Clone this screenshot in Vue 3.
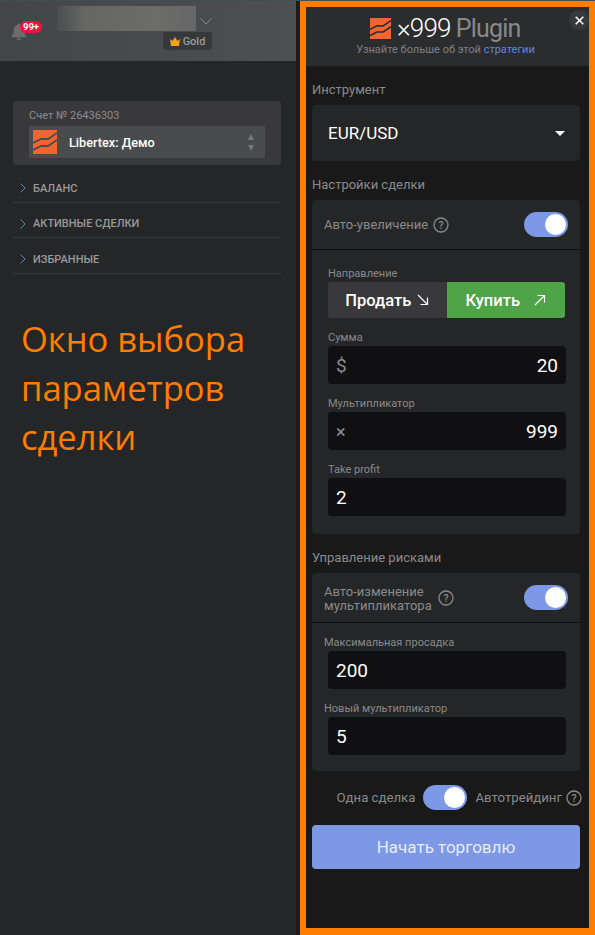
<script setup>
const menu = ['БАЛАНС', 'АКТИВНЫЕ СДЕЛКИ', 'ИЗБРАННЫЕ']
</script>

<template>
  <div class="page">
    <div class="left">
      <div class="top">
        <div class="bell">
          <svg width="16" height="18" viewBox="0 0 16 18"><path d="M8 0.5c.8 0 1.300.6 1.300 1.300 2.600.6 3.900 2.700 3.900 5.400 0 3 .8 4.600 2.300 6v1H.5v-1c1.500-1.400 2.300-3 2.300-6 0-2.700 1.300-4.800 3.900-5.400C6.700 1.100 7.200.5 8 .5zM5.800 15.500h4.400c0 1-1 1.800-2.200 1.800s-2.200-.8-2.200-1.800z" fill="#6b6c6e"/></svg>
          <span class="badge">99+</span>
        </div>
        <div class="blur"></div>
        <svg class="chev" width="12" height="7" viewBox="0 0 12 7"><path d="M.5.5 6 6l5.500-5.500" fill="none" stroke="#8a8b8d" stroke-width="1"/></svg>
        <div class="gold">
          <svg width="10" height="9" viewBox="0 0 10 9"><path d="M0 2l2.500 2L5 0l2.500 4L10 2 9 9H1z" fill="#f5a31a"/></svg>
          Gold
        </div>
      </div>

      <div class="account">
        <div class="acc-label">Счет № 26436303</div>
        <div class="acc-select">
          <svg width="24" height="24" viewBox="0 0 24 24"><rect width="24" height="24" fill="#f26531"/><path d="M0 13 8 9h7l9-6M0 20l8-4h7l9-6" fill="none" stroke="#4a4b4d" stroke-width="1.800"/></svg>
          <span class="acc-name">Libertex: Демо</span>
          <span class="arrows"><i class="up"></i><i class="down"></i></span>
        </div>
      </div>

      <div class="menu">
        <div v-for="item in menu" :key="item" class="menu-row">
          <svg width="6" height="10" viewBox="0 0 6 10"><path d="M.7.7 5 5 .7 9.300" fill="none" stroke="#6f82bd" stroke-width="1"/></svg>
          <span>{{ item }}</span>
        </div>
      </div>

      <p class="caption">Окно выбора<br>параметров<br>сделки</p>
    </div>

    <div class="gutter"></div>

    <div class="frame">
      <div class="panel">
        <div class="head">
          <div class="logo">
            <svg width="21" height="21" viewBox="0 0 24 24"><rect width="24" height="24" fill="#f26531"/><path d="M0 13 8 9h7l9-6M0 20l8-4h7l9-6" fill="none" stroke="#2c2d2f" stroke-width="1.800"/></svg>
            <span class="x999">×999</span>
            <span class="plugin">Plugin</span>
          </div>
          <div class="sub">Узнайте больше об этой <span>стратегии</span></div>
          <div class="close">
            <svg width="9" height="9" viewBox="0 0 9 9"><path d="M.7.7l7.600 7.600M8.300.7.700 8.300" stroke="#fff" stroke-width="1.600"/></svg>
          </div>
        </div>

        <div class="body">
          <div class="title first">Инструмент</div>
          <div class="select">
            <span>EUR/USD</span>
            <i class="caret"></i>
          </div>

          <div class="title">Настройки сделки</div>
          <div class="card">
            <div class="row">
              <span>Авто-увеличение</span>
              <svg class="help" width="16" height="16" viewBox="0 0 16 16"><circle cx="8" cy="8" r="7" fill="none" stroke="#8a8a8a" stroke-width="1.300"/><text x="8" y="11.500" text-anchor="middle" font-size="10.500" font-family="Roboto" font-weight="500" fill="#8a8a8a">?</text></svg>
              <div class="toggle"><i></i></div>
            </div>
            <div class="fields">
              <label class="dir-label">Направление</label>
              <div class="dir">
                <div class="sell">Продать
                  <svg width="12" height="12" viewBox="0 0 12 12"><path d="M1 1l9.500 9.500M10.500 3.500v7h-7" fill="none" stroke="#fff" stroke-width="1.200"/></svg>
                </div>
                <div class="buy">Купить
                  <svg width="12" height="12" viewBox="0 0 12 12"><path d="M1 11 10.500 1.500M3.500 1.500h7v7" fill="none" stroke="#fff" stroke-width="1.200"/></svg>
                </div>
              </div>
              <label>Сумма</label>
              <div class="input"><span class="pre dollar">$</span><span class="val">20</span></div>
              <label>Мультипликатор</label>
              <div class="input"><span class="pre">×</span><span class="val">999</span></div>
              <label>Take profit</label>
              <div class="input"><span>2</span></div>
            </div>
          </div>

          <div class="title">Управление рисками</div>
          <div class="card">
            <div class="row">
              <span class="two">Авто-изменение<br>мультипликатора</span>
              <svg class="help" width="16" height="16" viewBox="0 0 16 16"><circle cx="8" cy="8" r="7" fill="none" stroke="#8a8a8a" stroke-width="1.300"/><text x="8" y="11.500" text-anchor="middle" font-size="10.500" font-family="Roboto" font-weight="500" fill="#8a8a8a">?</text></svg>
              <div class="toggle"><i></i></div>
            </div>
            <div class="fields risk">
              <label>Максимальная просадка</label>
              <div class="input"><span>200</span></div>
              <label>Новый мультипликатор</label>
              <div class="input"><span>5</span></div>
            </div>
          </div>

          <div class="mode">
            <span>Одна сделка</span>
            <div class="toggle"><i></i></div>
            <span>Автотрейдинг</span>
            <svg width="16" height="16" viewBox="0 0 16 16"><circle cx="8" cy="8" r="7" fill="none" stroke="#8a8a8a" stroke-width="1.300"/><text x="8" y="11.500" text-anchor="middle" font-size="10.500" font-family="Roboto" font-weight="500" fill="#8a8a8a">?</text></svg>
          </div>

          <div class="start">Начать торговлю</div>
        </div>
      </div>
    </div>
  </div>
</template>

<style>
html, body { margin: 0; background: #252628; }
</style>

<style scoped>
.page {
  width: 595px;
  height: 935px;
  display: flex;
  overflow: hidden;
  background: #252628;
  font-family: Roboto, "Liberation Sans", sans-serif;
  border-top: 1px solid #3f5054;
  box-sizing: border-box;
}

.left {
  width: 296px;
  flex: none;
}

.top {
  position: relative;
  height: 60px;
  background: linear-gradient(90deg, #444547, #4e4f51);
  margin-bottom: 40px;
}

.bell {
  position: absolute;
  left: 11px;
  top: 22px;
  line-height: 0;
}

.badge {
  position: absolute;
  left: 9px;
  top: -2px;
  width: 22px;
  height: 12px;
  border-radius: 6px;
  background: #f0123c;
  color: #fff;
  font-size: 9.500px;
  font-weight: 700;
  line-height: 12px;
  text-align: center;
}

.blur {
  position: absolute;
  left: 57px;
  top: 5px;
  width: 139px;
  height: 25px;
  background: linear-gradient(90deg, #4b4c4e, #666765 20%, #6c6d6b 70%, #666766);
}

.chev {
  position: absolute;
  left: 200px;
  top: 17px;
}

.gold {
  position: absolute;
  left: 163px;
  top: 31px;
  width: 49px;
  height: 18px;
  border-radius: 3px;
  background: #37383a;
  color: #9a9a9a;
  font-size: 11px;
  font-weight: 500;
  display: flex;
  align-items: center;
  justify-content: center;
  gap: 3px;
}

.account {
  width: 268px;
  height: 64px;
  margin: 0 0 0 13px;
  padding: 8px 16px 0;
  box-sizing: border-box;
  background: #39393b;
  border-radius: 4px;
}

.acc-label {
  font-size: 11px;
  color: #8c8c8c;
  line-height: 14px;
  margin-bottom: 3px;
}

.acc-select {
  height: 32px;
  background: #4a4b4d;
  display: flex;
  align-items: center;
  padding: 0 11px 0 4px;
  gap: 12px;
}

.acc-name {
  flex: 1;
  font-size: 12.700px;
  font-weight: 500;
  color: #fff;
}

.arrows {
  display: flex;
  flex-direction: column;
  gap: 5px;
}

.arrows i {
  border-left: 3px solid transparent;
  border-right: 3px solid transparent;
}

.arrows .up { border-bottom: 6px solid #77787a; }
.arrows .down { border-top: 6px solid #77787a; }

.menu {
  padding-top: 2px;
}

.menu-row {
  width: 268px;
  height: 35.500px;
  margin-left: 13px;
  padding: 8px 0 0 7px;
  box-sizing: border-box;
  border-bottom: 1px solid #39393b;
  display: flex;
  align-items: center;
  gap: 7px;
  font-size: 11px;
  font-weight: 500;
  color: #9a9a9a;
}

.caption {
  margin: 40px 0 0 21px;
  font-family: "Open Sans", sans-serif;
  font-size: 34.500px;
  line-height: 49px;
  color: #ff7d00;
}

.gutter {
  width: 4px;
  flex: none;
  background: #1c1c1e;
}

.frame {
  width: 295px;
  height: 934px;
  flex: none;
  padding: 6px;
  box-sizing: border-box;
  background: #ff7d00;
  margin-bottom: 1px;
}

.panel {
  height: 921px;
  background: #191919;
}

.head {
  position: relative;
  height: 59px;
  background: #2b2c2e;
  text-align: center;
  box-sizing: border-box;
  padding-top: 7px;
}

.logo {
  display: flex;
  align-items: center;
  gap: 6px;
  height: 28px;
  padding-left: 64px;
  font-size: 26px;
  font-weight: 300;
}

.x999 { color: #fff; letter-spacing: -0.8px; }
.plugin { color: #88898b; font-weight: 400; font-size: 25px; letter-spacing: -0.8px; margin-left: -1px; }

.sub {
  font-size: 11px;
  color: #7b8087;
  line-height: 14px;
  margin: 1px 4px 0 0;
}

.sub span { color: #5f85e8; }

.close {
  position: absolute;
  right: 0;
  top: 3px;
  width: 20px;
  height: 20px;
  border-radius: 50%;
  background: #38393b;
  display: flex;
  align-items: center;
  justify-content: center;
}

.body {
  padding: 0 9px 0 6px;
}

.title {
  height: 39px;
  font-size: 13px;
  color: #8a8a8a;
  line-height: 16px;
  padding-top: 16px;
  box-sizing: border-box;
}

.select {
  height: 56px;
  background: #252628;
  border-radius: 4px;
  display: flex;
  align-items: center;
  justify-content: space-between;
  padding: 0 15px 0 16px;
  font-size: 17px;
  color: #fff;
}

.caret {
  border-left: 5px solid transparent;
  border-right: 5px solid transparent;
  border-top: 5px solid #fff;
}

.card {
  background: #252628;
  border-radius: 4px;
}

.row {
  height: 49px;
  padding: 0 12px;
  border-bottom: 1px solid #0f0f10;
  display: flex;
  align-items: center;
  gap: 5px;
  font-size: 13px;
  color: #8a8a8a;
}

.two {
  line-height: 14px;
  margin-top: 2px;
  margin-right: 1px;
}

.toggle {
  width: 44px;
  height: 25px;
  border-radius: 13px;
  background: #7d98e4;
  position: relative;
  flex: none;
}

.row .toggle { margin-left: auto; }

.toggle i {
  position: absolute;
  right: 2px;
  top: 2px;
  width: 21px;
  height: 21px;
  border-radius: 50%;
  background: #fff;
}

.fields {
  padding: 0 14px 18px 16px;
  display: flex;
  flex-direction: column;
}

.fields.risk {
  padding-bottom: 16px;
}

.fields label {
  height: 28px;
  padding-top: 13px;
  box-sizing: border-box;
  font-size: 11px;
  line-height: 14px;
  color: #8a8a8a;
}

.fields .dir-label {
  height: 32px;
  padding-top: 17px;
}

.risk label {
  margin-left: -4px;
}

.dir {
  display: flex;
  width: 237px;
  height: 36px;
  border-radius: 3px;
  overflow: hidden;
  font-size: 16.500px;
  font-weight: 500;
  color: #fff;
}

.sell, .buy {
  width: 50%;
  display: flex;
  align-items: center;
  justify-content: center;
  gap: 6px;
}

.sell { background: #39393b; }
.buy { background: #4fa447; gap: 14px; }

.input {
  height: 38px;
  background: #101012;
  border-radius: 4px;
  padding: 0 8px;
  display: flex;
  align-items: center;
  font-size: 19px;
  color: #fff;
}

.pre {
  color: #8a8a8a;
  font-size: 18px;
}

.dollar { font-size: 19px; }

.val { margin-left: auto; }

.mode {
  display: flex;
  align-items: center;
  justify-content: flex-end;
  gap: 8px;
  height: 25px;
  margin: 14px -2px 0 0;
  font-size: 13.200px;
  color: #8a8a8a;
}

.mode svg { margin-left: -4px; }

.start {
  margin-top: 15px;
  height: 44px;
  background: #7d98e4;
  border-radius: 4px;
  display: flex;
  align-items: center;
  justify-content: center;
  font-size: 17px;
  color: #e8ecf8;
}
</style>
